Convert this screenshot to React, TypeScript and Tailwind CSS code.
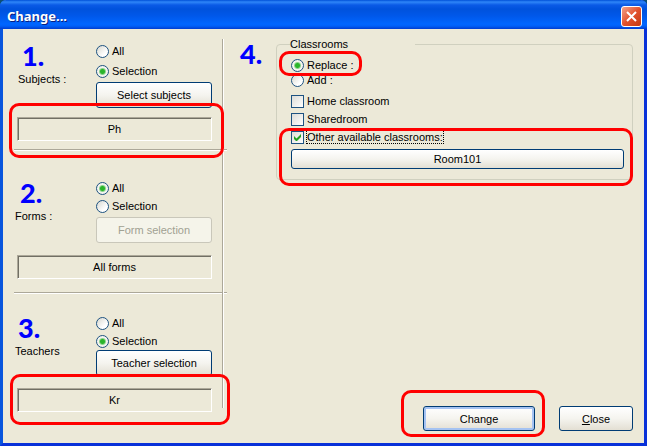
import { useState } from "react";
import type { ReactNode } from "react";
import clsx from "clsx";

type Mode = "all" | "selection";

type SectionProps = {
  name: string;
  step: string;
  label: string;
  buttonText: string;
  value: string;
  initial: Mode;
  className: string;
  stepClass: string;
  labelClass: string;
  radiosClass?: string;
  buttonClass?: string;
  valueClass: string;
  disabled?: boolean;
  mark?: string;
};

const buttonBase =
  "rounded-[3px] border border-[#003c74] bg-linear-to-b from-white via-[#f5f4ef] to-[#e3dfd3] text-center";

const stepBase = "font-['Lato',sans-serif] text-[27px] leading-[28px] font-black text-[#0000ff]";

function Mark({ className }: { className: string }) {
  return (
    <span
      aria-hidden="true"
      className={clsx(
        "pointer-events-none absolute z-10 rounded-[10px] border-3 border-[#ff0000]",
        className
      )}
    />
  );
}

function Radio({
  name,
  checked,
  onChange,
  children,
}: {
  name: string;
  checked: boolean;
  onChange: () => void;
  children: ReactNode;
}) {
  return (
    <label className="flex h-[18px] items-center gap-[3px]">
      <input
        type="radio"
        name={name}
        checked={checked}
        onChange={onChange}
        className="size-[13px] appearance-none rounded-full border border-[#1d5281] bg-linear-to-br from-[#d8d8d0] to-white to-70% checked:bg-[radial-gradient(circle,#2bb52b_0_2px,#8fd58f_3px,#f4f4ef_4px)]"
      />
      <span>{children}</span>
    </label>
  );
}

function Checkbox({
  checked = false,
  children,
}: {
  checked?: boolean;
  children: ReactNode;
}) {
  return (
    <label className="flex h-[18px] items-center gap-[3px]">
      <span className="relative size-[13px]">
        <input
          type="checkbox"
          defaultChecked={checked}
          className="peer block size-[13px] appearance-none border border-[#1d5281] bg-linear-to-br from-[#dcdcd7] to-white"
        />
        <svg
          viewBox="0 0 13 13"
          className="pointer-events-none absolute inset-0 hidden size-[13px] peer-checked:block"
        >
          <path d="M3 5v3l2 2h1l4-4V3L5.500 7.500z" fill="#21a121" />
        </svg>
      </span>
      {children}
    </label>
  );
}

function Section(props: SectionProps) {
  const [mode, setMode] = useState<Mode>(props.initial);

  return (
    <section className={props.className}>
      <div className="flex">
        <div className="w-[82px] shrink-0">
          <div className={clsx(stepBase, props.stepClass)}>{props.step}</div>
          <h2 className={clsx("pt-px leading-4", props.labelClass)}>{props.label}</h2>
        </div>
        <div className="mr-[10px] flex-1">
          <div className={clsx("flex flex-col", props.radiosClass)}>
            <Radio
              name={props.name}
              checked={mode === "all"}
              onChange={() => setMode("all")}
            >
              All
            </Radio>
            <Radio
              name={props.name}
              checked={mode === "selection"}
              onChange={() => setMode("selection")}
            >
              Selection
            </Radio>
          </div>
          <button
            type="button"
            disabled={props.disabled}
            className={clsx(
              "h-[26px] w-full",
              props.disabled
                ? "rounded-[3px] border border-[#c9c7ba] bg-[#f5f4ea] text-[#a1a192]"
                : buttonBase,
              props.buttonClass
            )}
          >
            {props.buttonText}
          </button>
        </div>
      </div>
      <div className={clsx("relative mr-[10px] ml-[3px]", props.valueClass)}>
        <output className="block h-6 border border-t-[#aca899] border-r-white border-b-white border-l-[#aca899] text-center leading-[22px] shadow-[inset_1px_1px_0_#716f64]">
          {props.value}
        </output>
        {props.mark && <Mark className={props.mark} />}
      </div>
    </section>
  );
}

function Rule({ className }: { className: string }) {
  return (
    <hr
      className={clsx(
        "-mr-[5px] h-[2px] border-t border-b border-t-[#aca899] border-b-white",
        className
      )}
    />
  );
}

export default function App() {
  const [target, setTarget] = useState<"replace" | "add">("replace");

  return (
    <div className="min-h-screen bg-[#0d4f74]">
      <div className="flex min-h-screen flex-col rounded-t-[6px] border-r-3 border-b-3 border-l-3 border-t-0 border-r-[#0831d9] border-b-[#0831d9] border-l-[#0855dd] bg-[#ece9d8] font-['Liberation_Sans',Arial,sans-serif] text-[11px] leading-4 text-black">
        <header className="-mx-[3px] flex h-[29px] items-center justify-between rounded-t-[6px] bg-[linear-gradient(180deg,#0050d8_0,#2f86f8_2px,#0a5ae6_5px,#0052dc_9px,#0058ea_16px,#0066ff_24px,#0060f8_26px,#003dd0_29px)] pt-[3px] pr-[5px] pl-[7px]">
          <h1 className="font-['Noto_Sans',sans-serif] text-[13px] font-bold text-white [text-shadow:1px_1px_0_#0a1f80]">
            Change...
          </h1>
          <button
            type="button"
            aria-label="Close window"
            className="flex size-[21px] items-center justify-center rounded-[3px] border border-white bg-linear-to-br from-[#f0a088] via-[#e2512c] to-[#c43a10]"
          >
            <svg viewBox="0 0 11 11" className="size-[11px]">
              <path d="M1 1l9 9M10 1l-9 9" stroke="#fff" strokeWidth="2" />
            </svg>
          </button>
        </header>

        <form className="flex flex-1 pt-[10px] pl-[11px]" onSubmit={(e) => e.preventDefault()}>
          <div className="w-[208px] shrink-0">
            <Section
              name="subjects"
              step="1."
              label="Subjects :"
              buttonText="Select subjects"
              value="Ph"
              initial="selection"
              className="pt-[3px]"
              stepClass="pl-2"
              labelClass="pl-1"
              radiosClass="gap-[2px]"
              buttonClass="mt-[2px]"
              valueClass="mt-[9px]"
              mark="-top-[14px] -right-[12px] -bottom-[17px] -left-[8px]"
            />
            <Rule className="mt-2" />
            <Section
              name="forms"
              step="2."
              label="Forms :"
              buttonText="Form selection"
              value="All forms"
              initial="all"
              className="pt-[28px]"
              stepClass="pl-[6px]"
              labelClass="pl-px"
              buttonClass="mt-[2px]"
              valueClass="mt-3"
              disabled
            />
            <Rule className="mt-[13px]" />
            <Section
              name="teachers"
              step="3."
              label="Teachers"
              buttonText="Teacher selection"
              value="Kr"
              initial="selection"
              className="pt-[20px]"
              stepClass="pl-1"
              labelClass="pl-px"
              valueClass="mt-3"
              mark="-top-[14px] -right-[18px] -bottom-[13px] -left-[7px]"
            />
          </div>
          <div className="mb-[35px] w-[2px] border-r border-l border-r-white border-l-[#aca899]" />

          <div className="flex min-w-0 flex-1 flex-col pr-[11px] pb-3 pl-4">
            <div className="flex">
              <div className={clsx(stepBase, "w-9 shrink-0 pt-px")}>4.</div>
              <fieldset className="relative -mt-[3px] min-w-0 flex-1 rounded-[4px] border border-[#d0d0bf] pr-2 pb-[10px] pl-[14px]">
                <legend className="-ml-px w-[125px] leading-4">Classrooms</legend>
                <div className="relative mt-[4px]">
                  <Radio
                    name="target"
                    checked={target === "replace"}
                    onChange={() => setTarget("replace")}
                  >
                    Replace :
                  </Radio>
                  <Mark className="-top-[5px] -bottom-[2px] -left-[12px] w-[83px]" />
                </div>
                <div className="-mt-[3px]">
                  <Radio
                    name="target"
                    checked={target === "add"}
                    onChange={() => setTarget("add")}
                  >
                    Add :
                  </Radio>
                </div>
                <div className="mt-[3px]">
                  <Checkbox>Home classroom</Checkbox>
                  <Checkbox>Sharedroom</Checkbox>
                </div>
                <div className="relative">
                  <Checkbox checked>
                    <span className="leading-[12px] outline outline-dotted outline-black">
                      Other available classrooms:
                    </span>
                  </Checkbox>
                  <button type="button" className={clsx(buttonBase, "mt-[3px] block h-5 w-full leading-4")}>
                    Room101
                  </button>
                  <Mark className="top-0 -right-[9px] -bottom-[17px] -left-[12px]" />
                </div>
              </fieldset>
            </div>

            <footer className="mt-auto flex justify-end gap-6">
              <div className="relative">
                <button
                  type="submit"
                  className={clsx(
                    buttonBase,
                    "h-[25px] w-[112px] shadow-[inset_0_0_0_2px_#a5c3f2]"
                  )}
                >
                  Change
                </button>
                <Mark className="-top-[16px] -right-[10px] -bottom-[6px] -left-[22px]" />
              </div>
              <button type="button" className={clsx(buttonBase, "h-[25px] w-[74px]")}>
                <span className="underline">C</span>lose
              </button>
            </footer>
          </div>
        </form>
      </div>
    </div>
  );
}
